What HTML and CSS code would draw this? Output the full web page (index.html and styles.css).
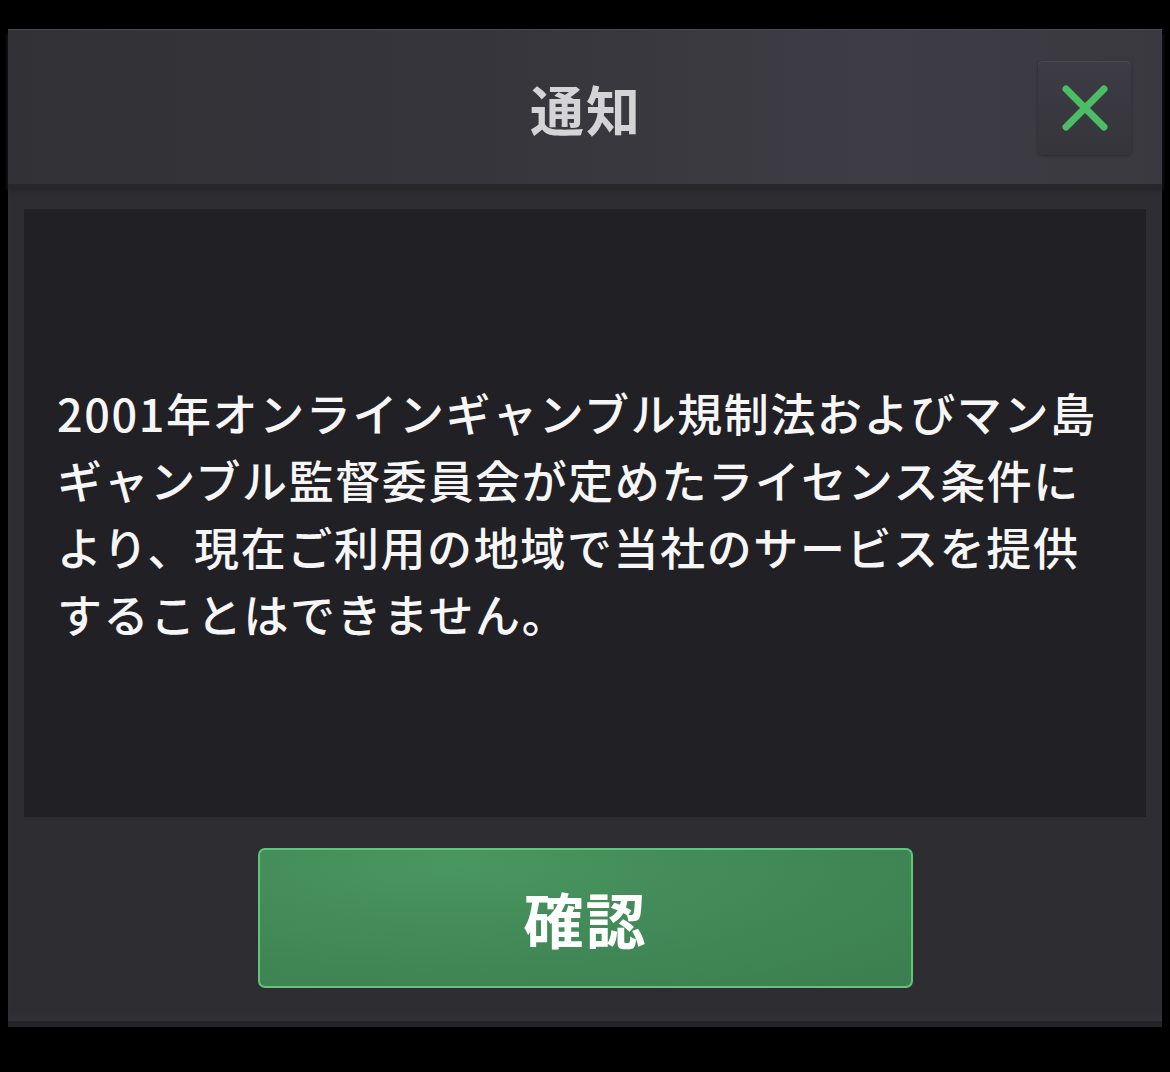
FILE: index.html
```html
<!DOCTYPE html>
<html lang="ja">
<head>
<meta charset="utf-8">
<title>通知</title>
<link rel="stylesheet" href="styles.css">
</head>
<body>
<div class="dialog">
  <div class="header">
    <h1 class="title">通知</h1>
    <button class="close" aria-label="閉じる">
      <svg width="46" height="46" viewBox="0 0 46 46"><path d="M4 4 L42 42 M42 4 L4 42" stroke="#4cbd64" stroke-width="7" stroke-linecap="round" fill="none"/></svg>
    </button>
  </div>
  <div class="body">
    <div class="content">
      <p class="message">2001年オンラインギャンブル規制法およびマン島ギャンブル監督委員会が定めたライセンス条件により、現在ご利用の地域で当社のサービスを提供することはできません。</p>
    </div>
    <div class="actions">
      <button class="confirm">確認</button>
    </div>
  </div>
</div>
</body>
</html>
```
FILE: styles.css
```css
html, body {
  margin: 0;
  padding: 0;
  background: #000;
}
body {
  width: 1170px;
  height: 1072px;
  overflow: hidden;
  font-family: "Noto Sans CJK JP", "Noto Sans", sans-serif;
}
.dialog {
  margin: 29px 0 0 8px;
  width: 1154px;
  height: 998px;
  background: #2e2d32;
  display: flex;
  flex-direction: column;
  box-shadow: inset 0 -6px 0 #242328, inset 0 -12px 8px -4px #37363d;
}
.header {
  position: relative;
  height: 155px;
  flex: none;
  background: linear-gradient(90deg, #323136 0%, #36353b 40%, #3e3d45 75%, #3a3940 100%);
  box-shadow: inset 0 1px 0 #4a4955, 0 4px 4px #27262b;
  border-bottom: 3px solid #28272c;
  display: flex;
  align-items: center;
  justify-content: center;
}
.title {
  margin: 4px 0 0;
  font-size: 54px;
  font-weight: 700;
  letter-spacing: 2px;
  color: #d4d4d6;
  line-height: 1;
  padding-left: 2px;
}
.close {
  position: absolute;
  left: 1030px;
  top: 32px;
  width: 93px;
  height: 94px;
  border: none;
  border-radius: 5px;
  background: linear-gradient(180deg, #3d3c44 0%, #36353c 100%);
  box-shadow: inset 0 1px 0 #4b4a55, 0 1px 3px #2a292e;
  display: flex;
  align-items: center;
  justify-content: center;
  padding: 0;
}
.body {
  flex: 1;
  display: flex;
  flex-direction: column;
  padding: 22px 16px 0;
}
.content {
  height: 608px;
  background: #212025;
  display: flex;
  align-items: center;
  padding: 0 33px;
}
.message {
  margin: 0;
  color: #f6f6f6;
  font-size: 45px;
  letter-spacing: 1.6px;
  line-height: 67px;
  font-weight: 500;
}
.actions {
  display: flex;
  justify-content: center;
  padding-top: 31px;
}
.confirm {
  width: 655px;
  height: 140px;
  margin-left: 1px;
  border: 2px solid #62c47c;
  border-radius: 7px;
  background: radial-gradient(ellipse at 30% 10%, #4a9660 0%, #428a58 45%, #3c7e4f 100%);
  color: #ffffff;
  font-family: "Noto Sans CJK JP", sans-serif;
  font-size: 60px;
  font-weight: 700;
  letter-spacing: 2px;
  padding: 0;
  line-height: 1;
}
```
